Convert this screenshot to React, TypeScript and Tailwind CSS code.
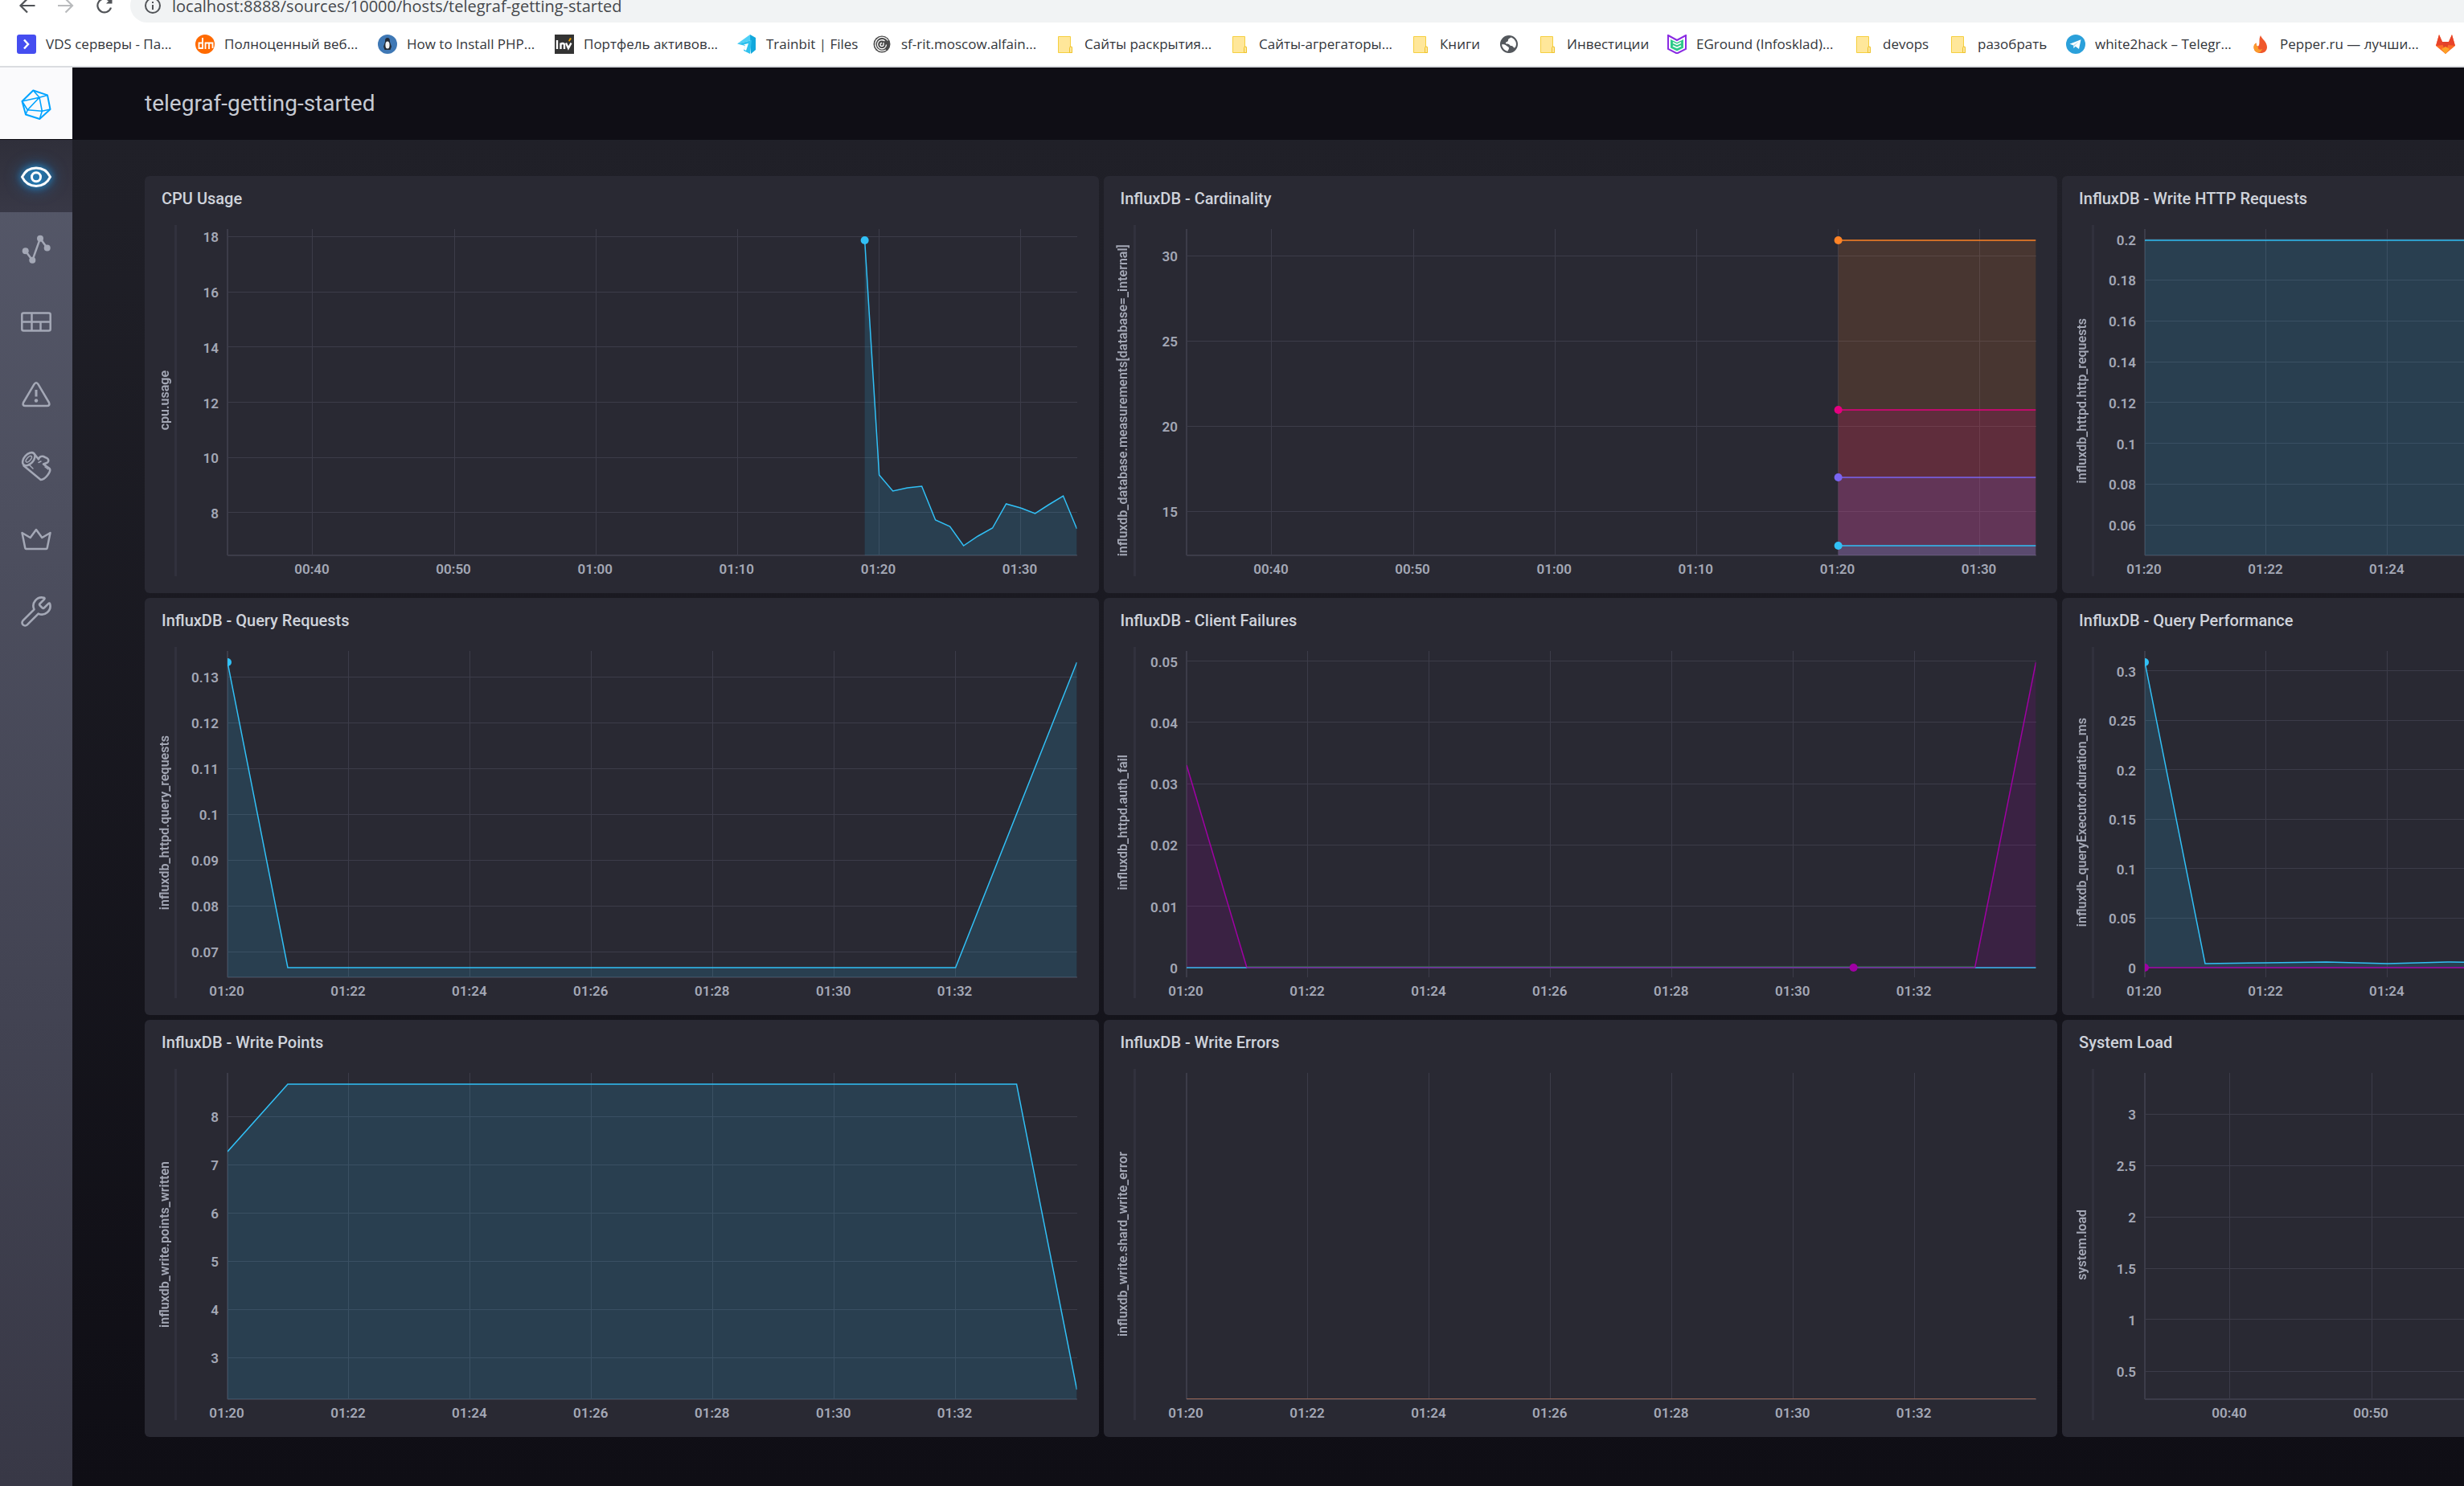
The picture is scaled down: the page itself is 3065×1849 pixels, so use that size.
import React from "react";
import { Wrench } from "lucide-react";

const PLOT_W = 1057;
const PLOT_H = 406;

const CYAN = "#31c0f6";
const PURPLE = "#a000a4";

type Point = [number, number];

interface Series {
  color: string;
  points: Point[];
  fill?: boolean;
  dots?: Point[];
}

interface ChartSpec {
  title: string;
  axis: string;
  yLabels: string[];
  yStart: number;
  yStep: number;
  xLabels: string[];
  xStart: number;
  xStep: number;
  axisY?: number;
  series: Series[];
}

const HOUR = { xStart: 106, xStep: 176.2 };
const QUARTER = { xStart: 0, xStep: 151 };
const hourLabels = ["00:40", "00:50", "01:00", "01:10", "01:20", "01:30"];
const quarterLabels = ["01:20", "01:22", "01:24", "01:26", "01:28", "01:30", "01:32"];

const flat = (color: string, y: number): Series => ({
  color,
  points: [[811, y], [PLOT_W, y]],
  fill: true,
  dots: [[811, y]],
});

const charts: ChartSpec[] = [
  {
    title: "CPU Usage",
    axis: "cpu.usage",
    yLabels: ["18", "16", "14", "12", "10", "8"],
    yStart: 9.4,
    yStep: 68.7,
    xLabels: hourLabels,
    ...HOUR,
    series: [
      {
        color: CYAN,
        fill: true,
        dots: [[793, 14]],
        points: [
          [793, 14], [811, 306], [828, 326], [846, 322], [864, 320], [881, 362], [899, 370], [916, 394],
          [934, 382], [952, 372], [969, 342], [987, 347], [1005, 354], [1022, 343], [1040, 332], [1057, 373],
        ],
      },
    ],
  },
  {
    title: "InfluxDB - Cardinality",
    axis: "influxdb_database.measurements[database=_internal]",
    yLabels: ["30", "25", "20", "15"],
    yStart: 33.4,
    yStep: 106,
    xLabels: hourLabels,
    ...HOUR,
    series: [flat("#ff8326", 14), flat("#e5007f", 225), flat("#7a65f2", 309), flat(CYAN, 394)],
  },
  {
    title: "InfluxDB - Write HTTP Requests",
    axis: "influxdb_httpd.http_requests",
    yLabels: ["0.2", "0.18", "0.16", "0.14", "0.12", "0.1", "0.08", "0.06"],
    yStart: 12.6,
    yStep: 50.8,
    xLabels: quarterLabels.slice(0, 3),
    ...QUARTER,
    series: [{ color: CYAN, fill: true, points: [[0, 14], [PLOT_W, 14]] }],
  },
  {
    title: "InfluxDB - Query Requests",
    axis: "influxdb_httpd.query_requests",
    yLabels: ["0.13", "0.12", "0.11", "0.1", "0.09", "0.08", "0.07"],
    yStart: 32.2,
    yStep: 57,
    xLabels: quarterLabels,
    ...QUARTER,
    series: [
      { color: CYAN, fill: true, dots: [[0, 14]], points: [[0, 14], [75, 394], [906, 394], [1057, 14]] },
    ],
  },
  {
    title: "InfluxDB - Client Failures",
    axis: "influxdb_httpd.auth_fail",
    yLabels: ["0.05", "0.04", "0.03", "0.02", "0.01", "0"],
    yStart: 12.7,
    yStep: 76.2,
    xLabels: quarterLabels,
    ...QUARTER,
    axisY: 394,
    series: [
      { color: "#31c0f6", points: [[0, 394], [75, 394]] },
      { color: "#31c0f6", points: [[981, 394], [1057, 394]] },
      { color: "#2f6b45", points: [[75, 393], [981, 393]] },
      {
        color: PURPLE,
        fill: true,
        dots: [[830, 394]],
        points: [[0, 142], [75, 394]],
      },
      { color: "#7d2fae", points: [[75, 394], [981, 394]] },
      { color: PURPLE, fill: true, points: [[981, 394], [1057, 14]] },
    ],
  },
  {
    title: "InfluxDB - Query Performance",
    axis: "influxdb_queryExecutor.duration_ms",
    yLabels: ["0.3", "0.25", "0.2", "0.15", "0.1", "0.05", "0"],
    yStart: 24.6,
    yStep: 61.5,
    xLabels: quarterLabels.slice(0, 3),
    ...QUARTER,
    axisY: 394,
    series: [
      {
        color: CYAN,
        fill: true,
        dots: [[0, 14]],
        points: [[0, 14], [75, 389], [151, 388], [226, 387], [302, 389], [377, 387], [453, 388], [1057, 388]],
      },
      { color: PURPLE, dots: [[0, 394]], points: [[0, 394], [1057, 394]] },
    ],
  },
  {
    title: "InfluxDB - Write Points",
    axis: "influxdb_write.points_written",
    yLabels: ["8", "7", "6", "5", "4", "3"],
    yStart: 54,
    yStep: 60,
    xLabels: quarterLabels,
    ...QUARTER,
    series: [{ color: CYAN, fill: true, points: [[0, 98], [75, 14], [982, 14], [1057, 394]] }],
  },
  {
    title: "InfluxDB - Write Errors",
    axis: "influxdb_write.shard_write_error",
    yLabels: [],
    yStart: 0,
    yStep: 0,
    xLabels: quarterLabels,
    ...QUARTER,
    series: [{ color: "#b0705a", points: [[0, 406], [1057, 406]] }],
  },
  {
    title: "System Load",
    axis: "system.load",
    yLabels: ["3", "2.5", "2", "1.5", "1", "0.5"],
    yStart: 51,
    yStep: 64,
    xLabels: hourLabels.slice(0, 2),
    ...HOUR,
    series: [],
  },
];

const px = (v: number) => `${(v / PLOT_W) * 100}%`;
const py = (v: number) => `${(v / PLOT_H) * 100}%`;

function Plot({ spec }: { spec: ChartSpec }) {
  const base = spec.axisY ?? PLOT_H;
  const xs = spec.xLabels.map((label, i) => ({ label, x: spec.xStart + i * spec.xStep }));
  const ys = spec.yLabels.map((label, i) => ({ label, y: spec.yStart + i * spec.yStep }));
  return (
    <svg
      className="block h-full w-full overflow-visible fill-[#a4a8b6] text-[17px] font-semibold"
      role="img"
      aria-label={spec.title}
    >
      <g stroke="#3c3c49" shapeRendering="crispEdges">
        {ys.map(({ label, y }) => (
          <line key={label} x1="0" x2="100%" y1={py(y)} y2={py(y)} />
        ))}
        {xs.map(({ label, x }) => (
          <line key={label} x1={px(x)} x2={px(x)} y1="0" y2="100%" />
        ))}
        <line x1="0" x2="0" y1="0" y2="100%" strokeWidth="2" />
        <line x1="0" x2="100%" y1={py(base)} y2={py(base)} strokeWidth="2" />
      </g>
      <svg width="100%" height="100%">
        <svg
          width="100%"
          height="100%"
          viewBox={`0 0 ${PLOT_W} ${PLOT_H}`}
          preserveAspectRatio="none"
          overflow="visible"
        >
          {spec.series.map((s, i) => {
            const line = s.points.map((p) => p.join(",")).join(" ");
            const first = s.points[0];
            const last = s.points[s.points.length - 1];
            return (
              <g key={i}>
                {s.fill && (
                  <polygon
                    points={`${first[0]},${base} ${line} ${last[0]},${base}`}
                    fill={s.color}
                    fillOpacity="0.15"
                  />
                )}
                <polyline
                  points={line}
                  fill="none"
                  stroke={s.color}
                  strokeWidth="1.5"
                  vectorEffect="non-scaling-stroke"
                />
              </g>
            );
          })}
        </svg>
        {spec.series.flatMap((s, i) =>
          (s.dots ?? []).map(([x, y]) => (
            <circle key={`${i}-${x}`} cx={px(x)} cy={py(y)} r="5" fill={s.color} />
          )),
        )}
      </svg>
      {ys.map(({ label, y }) => (
        <text key={label} x="-11" y={py(y)} dy="7" textAnchor="end">
          {label}
        </text>
      ))}
      {xs.map(({ label, x }) => (
        <text key={label} x={px(x)} y="100%" dx="-1" dy="23" textAnchor="middle">
          {label}
        </text>
      ))}
    </svg>
  );
}

function ChartCard({ spec }: { spec: ChartSpec }) {
  return (
    <section className="flex h-[519px] min-w-0 flex-col rounded-md bg-[#292933]">
      <h2 className="mb-1.5 flex h-[55px] items-center pl-[21px] text-[20px] font-medium text-[#cfd3db]">
        {spec.title}
      </h2>
      <div className="flex h-[437px]">
        <div className="flex w-[37px] shrink-0 items-center justify-center pl-3">
          <span className="rotate-180 whitespace-nowrap text-[16px] leading-5 font-semibold text-[#a4a8b6] [writing-mode:vertical-rl]">
            {spec.axis}
          </span>
        </div>
        <div className="w-[3px] shrink-0 bg-[#31313d]" />
        <div className="mt-[5px] mr-[27px] mb-[26px] ml-[63px] min-w-0 flex-1">
          <Plot spec={spec} />
        </div>
      </div>
    </section>
  );
}

/* ---------- browser chrome ---------- */

const FolderIcon = () => (
  <svg viewBox="0 0 24 24" className="h-6 w-6">
    <path d="M3.5 2.5h15v13h2v7h-17z" fill="#ffe79a" stroke="#f5cf3f" />
    <path d="M17.5 22.5v-6q0-1.500 1.500-1.500t1.500 1.500v6z" fill="#ffe79a" stroke="#eec22c" />
  </svg>
);

const VdsIcon = () => (
  <svg viewBox="0 0 24 24" className="h-6 w-6">
    <rect width="24" height="24" rx="3" fill="#454df0" />
    <path d="M9 6.500l5 5.500-5 5.500" fill="none" stroke="#fff" strokeWidth="2.500" />
  </svg>
);

const DmIcon = () => (
  <svg viewBox="0 0 24 24" className="h-6 w-6">
    <circle cx="12" cy="12" r="12" fill="#ff6a00" />
    <g fill="none" stroke="#fff" strokeWidth="1.800">
      <path d="M9 4v14M9 10.500H4.500V17H9" />
      <path d="M12.500 18v-7.500h9V17M17 10.500V18" />
    </g>
  </svg>
);

const LinuxIcon = () => (
  <svg viewBox="0 0 24 24" className="h-6 w-6">
    <circle cx="12" cy="12" r="12" fill="#3f78b5" />
    <path d="M12 4c-3 0-3 3-3 5L7 15l1.500 4h7L17 15l-2-6C15 7 15 4 12 4z" fill="#222a35" />
    <ellipse cx="12" cy="13" rx="2.600" ry="4.500" fill="#f3f3f3" />
  </svg>
);

const InvIcon = () => (
  <svg viewBox="0 0 24 24" className="h-6 w-6">
    <rect width="24" height="24" fill="#333" />
    <g fill="none" stroke="#fff" strokeWidth="2.400">
      <path d="M3 7v11M7.500 18v-7.500M7.500 13q0-2 2.200-2t2.300 2v5" />
      <path d="M14 10.500l3 6.500 3.500-6.500" />
    </g>
    <path d="M17 8l2-4 2 1-2.500 3.500z" fill="#f7a600" />
  </svg>
);

const TrainbitIcon = () => (
  <svg viewBox="0 0 24 24" className="h-6 w-6">
    <path d="M0 11.500L16 0l2 7z" fill="#4fd0f7" />
    <path d="M16 0l7 4v15l-6 5z" fill="#12a8dc" />
    <path d="M0 11.500L18 7l-2 17-8-4 2-6-4-1z" fill="#2fc1ee" />
    <path d="M8 12.500l6-1.500-3 9-2.500-1.500 1.500-5z" fill="#fff" />
  </svg>
);

const SpiralIcon = () => (
  <svg viewBox="0 0 24 24" className="h-6 w-6">
    <circle cx="12" cy="12" r="10.500" fill="#4a4a4a" />
    <g fill="none" stroke="#fff" strokeWidth="1.300">
      <path d="M19.500 7.500A8.500 8.500 0 1 0 17 19" />
      <path d="M15.500 8A5.500 5.500 0 1 0 17.500 12.500" />
      <path d="M12 10.500a2 2 0 1 0 2 2V10" />
    </g>
  </svg>
);

const GlobeIcon = () => (
  <svg viewBox="0 0 24 24" className="h-6 w-6">
    <circle cx="12" cy="12" r="10.500" fill="#54585d" />
    <path d="M2.500 12.500c3-.5 5 0 6.500 1.500s3 1 3 3-1.500 2-1.500 4.500C6 21 2.500 17 2.500 12.500zM14.500 3c-.5 2-3.500 1.500-3.500 4s-3 1.500-3 3.500 4 .5 5 2.500 3.500.5 4.500 2.500 2.500.5 3.500-1C22.500 9 19 4 14.500 3z" fill="#fff" />
    <circle cx="12" cy="12" r="10" fill="none" stroke="#54585d" strokeWidth="2" />
  </svg>
);

const EgroundIcon = () => (
  <svg viewBox="0 0 24 24" className="h-6 w-6" fill="none">
    <path d="M1 1l11 6L23 1v17l-11 5.500L1 18z" stroke="#8a2be2" strokeWidth="2" />
    <path d="M4 6l8 4 8-4v10.500L12 20.500 4 16.500z" fill="#2fc98a" />
    <path d="M7 10l5 2.500 5-2.500M7 14l5 2.500 5-2.500" stroke="#fff" strokeWidth="1.500" />
  </svg>
);

const TelegramIcon = () => (
  <svg viewBox="0 0 24 24" className="h-6 w-6">
    <circle cx="12" cy="12" r="12" fill="#2ba0da" />
    <path d="M4.500 11.800L18.500 6.300 16 18l-4.300-3.200-2.200 2.200-.7-3.800z" fill="#fff" />
    <path d="M8.800 13.200L16 8.500l-5.500 5.800-1 2.700z" fill="#b9ddf0" />
  </svg>
);

const PepperIcon = () => (
  <svg viewBox="0 0 24 24" className="h-6 w-6">
    <path d="M12 1c1 4 8 8 8 14.500 0 5-3.500 7.500-8 7.500s-8.500-2.500-8.500-7c0-3 1.500-4.500 3-5.500 0 3 1 4 2.500 4C12 12 9 6 12 1z" fill="#f0582c" />
    <path d="M3.500 15c0-2.500 1.500-3.500 3-4.500 0 3 1 4.500 2.500 4.500-1 3 2 5 5 3-1 3-3 5-5 4.500-3.500-.5-5.500-3-5.500-7.500z" fill="#fb9a2c" />
  </svg>
);

const GitlabIcon = () => (
  <svg viewBox="0 0 24 24" className="h-6 w-6">
    <path d="M12 24L0 14 4 0l4 9h8l4-9 4 14z" fill="#fc6d26" />
    <path d="M12 24L7.500 9h9z" fill="#e24329" />
    <path d="M0 14L4 0l4 9 1 4zM24 14L20 0l-4 9-1 4z" fill="#e8432a" />
    <path d="M12 24l-5-6 5-3 5 3z" fill="#fca326" />
  </svg>
);

const bookmarks: { label: string; icon: () => React.JSX.Element; width: string }[] = [
  { label: "VDS серверы - Па...", icon: VdsIcon, width: "w-[222px]" },
  { label: "Полноценный веб...", icon: DmIcon, width: "w-[227px]" },
  { label: "How to Install PHP...", icon: LinuxIcon, width: "w-[220px]" },
  { label: "Портфель активов...", icon: InvIcon, width: "w-[227px]" },
  { label: "Trainbit | Files", icon: TrainbitIcon, width: "w-[168px]" },
  { label: "sf-rit.moscow.alfain...", icon: SpiralIcon, width: "w-[228px]" },
  { label: "Сайты раскрытия...", icon: FolderIcon, width: "w-[217px]" },
  { label: "Сайты-агрегаторы...", icon: FolderIcon, width: "w-[225px]" },
  { label: "Книги", icon: FolderIcon, width: "w-[110px]" },
  { label: "", icon: GlobeIcon, width: "w-[48px]" },
  { label: "Инвестиции", icon: FolderIcon, width: "w-[161px]" },
  { label: "EGround (Infosklad)...", icon: EgroundIcon, width: "w-[232px]" },
  { label: "devops", icon: FolderIcon, width: "w-[118px]" },
  { label: "разобрать", icon: FolderIcon, width: "w-[146px]" },
  { label: "white2hack – Telegr...", icon: TelegramIcon, width: "w-[230px]" },
  { label: "Pepper.ru — лучши...", icon: PepperIcon, width: "w-[230px]" },
  { label: "", icon: GitlabIcon, width: "w-[24px]" },
];

function BrowserChrome() {
  return (
    <div className="border-b-2 border-[#dadce0] bg-white font-['Open_Sans','Noto_Sans',sans-serif]">
      <div className="flex h-7 items-end overflow-hidden">
        <div className="flex h-[42px] w-full shrink-0 items-center">
          <button aria-label="Back" className="ml-[22px] h-6 w-6">
            <svg viewBox="0 0 24 24" fill="none" stroke="#505357" strokeWidth="2.200">
              <path d="M21.500 12H3.500M12 3.500L3.500 12l8.500 8.500" />
            </svg>
          </button>
          <button aria-label="Forward" className="ml-6 h-6 w-6">
            <svg viewBox="0 0 24 24" fill="none" stroke="#b9bbbd" strokeWidth="2.200">
              <path d="M2 12h18M11.500 3.500L20 12l-8.500 8.500" />
            </svg>
          </button>
          <button aria-label="Reload" className="ml-6 h-6 w-6">
            <svg viewBox="0 0 24 24" fill="none" stroke="#505357" strokeWidth="2.200">
              <path d="M20 14.500A8.500 8.500 0 1 1 18 6l2 2" />
              <path d="M21.500 2v7.500H14z" fill="#505357" stroke="none" />
            </svg>
          </button>
          <div className="ml-5 flex h-[42px] flex-1 items-center rounded-l-full bg-[#f1f3f4] pl-4">
            <svg viewBox="0 0 24 24" className="h-6 w-6 shrink-0" fill="none" stroke="#505357" strokeWidth="2">
              <circle cx="12" cy="12" r="9" />
              <path d="M12 11v6M12 7v2" />
            </svg>
            <input
              aria-label="Address"
              readOnly
              value="localhost:8888/sources/10000/hosts/telegraf-getting-started"
              className="ml-3 h-8 flex-1 bg-transparent text-[20px] text-[#45484c] outline-none"
            />
          </div>
        </div>
      </div>
      <div className="flex h-[54px] items-center overflow-hidden pl-[21px]">
        {bookmarks.map(({ label, icon: Icon, width }, i) => (
          <a
            key={i}
            href="#"
            aria-label={label || "Bookmark"}
            className={`${width} flex shrink-0 items-center gap-3 whitespace-nowrap text-[17px] text-[#33363b]`}
          >
            <Icon />
            {label}
          </a>
        ))}
      </div>
    </div>
  );
}

/* ---------- side navigation ---------- */

const LogoIcon = () => (
  <svg viewBox="0 0 40 40" className="h-10 w-10" fill="none" stroke="#00a3ff" strokeWidth="2" strokeLinejoin="round">
    <path d="M16.300 3.500L34 9.400 37.500 27 24.300 39 7 33.500 2.500 17z" />
    <path d="M2.500 17L24 12.200 34 9.400M16.300 3.500L24 12.200M24 12.200L9.300 27.800M24 12.200L27.300 29.200M9.300 27.800L27.300 29.200 37.500 27M27.300 29.200L24.300 39M2.500 17l6.800 10.800L7 33.500" strokeWidth="1.600" />
  </svg>
);

const navStroke = "h-10 w-10 fill-none stroke-[#a4a8b6] stroke-[2.5px]";

const EyeIcon = () => (
  <svg viewBox="0 0 40 40" className="h-10 w-10 overflow-visible fill-none stroke-white stroke-[3px] [filter:drop-shadow(0_0_4px_#22adf6)_drop-shadow(0_0_9px_#1a6fb8)]">
    <path d="M2.500 21.200C6 14 12.500 10 20 10s14 4 17.500 11.200C34 28.500 27.500 32.400 20 32.400S6 28.500 2.500 21.200z" />
    <circle cx="20" cy="21.200" r="5.500" />
  </svg>
);

const PulseIcon = () => (
  <svg viewBox="0 0 40 40" className={navStroke}>
    <path d="M6.700 23.300l8.600 11.500L25 7.700l8.700 11.900" />
    <g fill="#a4a8b6" stroke="none">
      <circle cx="6.700" cy="23.300" r="4" />
      <circle cx="15.300" cy="34.800" r="4" />
      <circle cx="25" cy="7.700" r="4" />
      <circle cx="33.700" cy="19.600" r="4" />
    </g>
  </svg>
);

const DashIcon = () => (
  <svg viewBox="0 0 40 40" className={navStroke}>
    <rect x="2.300" y="10.500" width="35.400" height="22" rx="2" />
    <path d="M2.300 21.500h35.400M14.500 10.500v11M14.500 21.500v11M25.500 21.500v11" />
  </svg>
);

const AlertIcon = () => (
  <svg viewBox="0 0 40 40" className={navStroke} strokeLinejoin="round">
    <path d="M17.500 9.200q2.500-4 5 0L36 32q1.500 4-2.500 4h-27q-4 0-2.500-4z" />
    <path d="M20 16v8.500" strokeWidth="3" />
    <circle cx="20" cy="29.500" r="2.200" fill="#a4a8b6" stroke="none" />
  </svg>
);

const LogIcon = () => (
  <svg viewBox="0 0 40 40" className={navStroke} strokeLinejoin="round" strokeLinecap="round">
    <ellipse cx="10.800" cy="12.200" rx="9.500" ry="5.800" transform="rotate(-48 10.800 12.200)" />
    <ellipse cx="10.800" cy="12.200" rx="4.800" ry="2.200" transform="rotate(-48 10.800 12.200)" strokeWidth="1.500" />
    <path d="M17 5l6 7.500c1-3.500 3.500-4.500 6.500-3.500 1 1.500 3.500 1 5 3s.5 4.500-1.500 5l-4 1.500 7.700 5.500c2.500 3-5 13.500-11 14L4.500 20.500" />
    <path d="M26 15l-3 1.500M31 22l4 3M12 20l4 4" strokeWidth="1.500" />
  </svg>
);

const CrownIcon = () => (
  <svg viewBox="0 0 40 40" className={navStroke} strokeLinejoin="round">
    <path d="M2.500 14l10.200 6L20 10l7.300 10 10.200-6-3.800 19q-.3 1-1 1H7.300q-.7 0-1-1z" />
  </svg>
);

const WrenchIcon = () => <Wrench className="mt-1 h-[42px] w-[42px]" strokeWidth={1.5} color="#a4a8b6" />;

const navItems: { label: string; icon: () => React.JSX.Element; active?: boolean }[] = [
  { label: "Host List", icon: EyeIcon, active: true },
  { label: "Explore", icon: PulseIcon },
  { label: "Dashboards", icon: DashIcon },
  { label: "Alerting", icon: AlertIcon },
  { label: "Log Viewer", icon: LogIcon },
  { label: "Admin", icon: CrownIcon },
  { label: "Configuration", icon: WrenchIcon },
];

function SideNav() {
  return (
    <nav className="flex w-[90px] shrink-0 flex-col bg-linear-to-b from-[#575a6b] to-[#383846]">
      <a
        href="#"
        aria-label="Home"
        className="flex h-[90px] items-center justify-center border-b border-[#0f0e15] bg-[#fafafc]"
      >
        <LogoIcon />
      </a>
      {navItems.map(({ label, icon: Icon, active }) => (
        <a
          key={label}
          href="#"
          aria-label={label}
          className={`flex h-[90px] items-center justify-center ${
            active ? "bg-linear-to-b from-[#2f2f3a] to-[#383846]" : ""
          }`}
        >
          <Icon />
        </a>
      ))}
    </nav>
  );
}

export default function App() {
  return (
    <div className="flex min-h-screen flex-col overflow-hidden bg-[#0f0e15] font-['Roboto',sans-serif]">
      <BrowserChrome />
      <div className="flex flex-1">
        <SideNav />
        <main className="flex min-w-0 flex-1 flex-col">
          <header className="flex h-[90px] items-center bg-[#0f0e15] pl-[90px]">
            <h1 className="text-[28px] text-[#c6cad3]">telegraf-getting-started</h1>
          </header>
          <div className="flex-1 overflow-hidden bg-linear-to-b from-[#202028] to-[#0f0e15] pt-[45px] pb-[61px] pl-[90px]">
            <div className="grid w-[123.8%] grid-cols-3 gap-1.5">
              {charts.map((spec) => (
                <ChartCard key={spec.title} spec={spec} />
              ))}
            </div>
          </div>
        </main>
      </div>
    </div>
  );
}
